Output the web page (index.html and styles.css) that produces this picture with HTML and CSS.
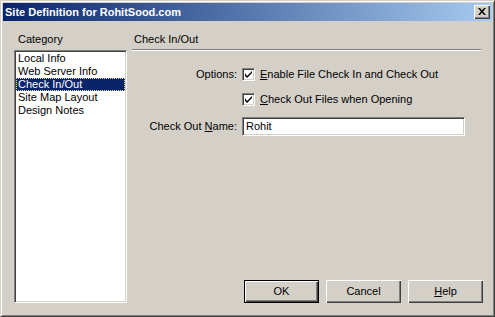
FILE: index.html
```html
<!DOCTYPE html>
<html lang="en">
<head>
    <meta charset="UTF-8">
    <title>Site Definition for RohitSood.com</title>
    <link rel="stylesheet" href="styles.css">
</head>
<body>
    <div class="window">
        <div class="titlebar">
            <span class="title">Site Definition for RohitSood.com</span>
            <span class="closebtn">
                <svg width="8" height="7" viewBox="0 0 8 7">
                    <path d="M0 0h2l2 2.5L6 0h2L5 3.5 8 7H6L4 4.5 2 7H0l3-3.5z" fill="#000"/>
                </svg>
            </span>
        </div>
        <div class="client">
            <div class="leftcol">
                <div class="caption">Category</div>
                <ul class="listbox">
                    <li>Local Info</li>
                    <li>Web Server Info</li>
                    <li class="selected">Check In/Out</li>
                    <li>Site Map Layout</li>
                    <li>Design Notes</li>
                </ul>
            </div>
            <div class="rightcol">
                <div class="caption heading">Check In/Out</div>
                <div class="separator"></div>
                <div class="form">
                    <div class="label">Options:</div>
                    <div class="check"><span class="box"><svg width="7" height="7" viewBox="0 0 7 7"><path d="M0 2v3l2 2 5-5V0L2 5z" fill="#000"/></svg></span><span><u>E</u>nable File Check In and Check Out</span></div>
                    <div class="label"></div>
                    <div class="check second"><span class="box"><svg width="7" height="7" viewBox="0 0 7 7"><path d="M0 2v3l2 2 5-5V0L2 5z" fill="#000"/></svg></span><span><u>C</u>heck Out Files when Opening</span></div>
                    <div class="label namelabel">Check Out <u>N</u>ame:</div>
                    <div class="textfield">Rohit</div>
                </div>
                <div class="buttons">
                    <div class="btn default">OK</div>
                    <div class="btn">Cancel</div>
                    <div class="btn"><span><u>H</u>elp</span></div>
                </div>
            </div>
        </div>
    </div>
</body>
</html>
```

FILE: styles.css
```css
html, body {
    margin: 0;
    padding: 0;
}

body {
    font-family: "Liberation Sans", Arial, sans-serif;
    font-size: 11px;
    line-height: 13px;
    color: #000;
    background-color: #d4d0c8;
}

/* window frame: outer light/dark edge, inner white/grey edge */
.window {
    width: 495px;
    height: 317px;
    box-sizing: border-box;
    padding: 2px;
    background-color: #d4d0c8;
    border-top: 1px solid #d4d0c8;
    border-left: 1px solid #d4d0c8;
    border-right: 1px solid #404040;
    border-bottom: 1px solid #404040;
    box-shadow: inset 1px 1px 0 #fff, inset -1px -1px 0 #808080;
    display: flex;
    flex-direction: column;
}

.titlebar {
    height: 18px;
    background: linear-gradient(to right, #0a246a, #a6caf0);
    display: flex;
    align-items: center;
    justify-content: space-between;
    padding: 0 2px;
}

.title {
    color: #fff;
    font-weight: bold;
}

.closebtn {
    width: 16px;
    height: 14px;
    box-sizing: border-box;
    padding-bottom: 1px;
    background-color: #d4d0c8;
    box-shadow: inset 1px 1px 0 #fff, inset -1px -1px 0 #404040, inset -2px -2px 0 #808080;
    display: flex;
    align-items: center;
    justify-content: center;
}

.client {
    flex: 1;
    display: grid;
    grid-template-columns: 113px 1fr;
    column-gap: 5px;
    padding: 12px 7px 11px 11px;
}

.leftcol, .rightcol {
    display: flex;
    flex-direction: column;
}

.caption {
    height: 13px;
    padding-left: 4px;
}

.heading {
    padding-left: 2px;
}

/* sunken look shared by list, checkbox and text field */
.listbox, .box, .textfield {
    background-color: #fff;
    border-top: 1px solid #808080;
    border-left: 1px solid #808080;
    border-right: 1px solid #fff;
    border-bottom: 1px solid #fff;
    box-shadow: inset 1px 1px 0 #404040, inset -1px -1px 0 #d4d0c8;
}

.listbox {
    list-style: none;
    margin: 4px 0 0 0;
    padding: 1px;
    flex: 1;
}

.listbox li {
    height: 13px;
    padding-left: 2px;
    white-space: nowrap;
}

.listbox li.selected {
    background-color: #0a246a;
    color: #fff;
    outline: 1px dotted #e8e4a0;
    outline-offset: -1px;
}

.separator {
    height: 1px;
    background-color: #808080;
    border-bottom: 1px solid #fff;
    margin: 3px 4px 0 0;
}

.form {
    display: grid;
    grid-template-columns: 105px 1fr;
    column-gap: 5px;
    align-items: center;
    margin-top: 17px;
}

.label {
    text-align: right;
    white-space: nowrap;
}

.check {
    display: flex;
    align-items: center;
    gap: 5px;
    height: 13px;
}

.check.second {
    margin-top: 12px;
}

.box {
    width: 13px;
    height: 13px;
    box-sizing: border-box;
    display: flex;
    align-items: center;
    justify-content: center;
}

.namelabel {
    margin-top: 11px;
}

.textfield {
    margin-top: 11px;
    width: 223px;
    height: 19px;
    box-sizing: border-box;
    padding: 2px 3px;
}

.buttons {
    margin-top: auto;
    margin-right: 2px;
    display: flex;
    justify-content: flex-end;
    gap: 7px;
}

.btn {
    width: 75px;
    height: 23px;
    box-sizing: border-box;
    background-color: #d4d0c8;
    box-shadow: inset 1px 1px 0 #fff, inset -1px -1px 0 #404040, inset -2px -2px 0 #808080;
    display: flex;
    align-items: center;
    justify-content: center;
}

.btn.default {
    border: 1px solid #000;
}
```
